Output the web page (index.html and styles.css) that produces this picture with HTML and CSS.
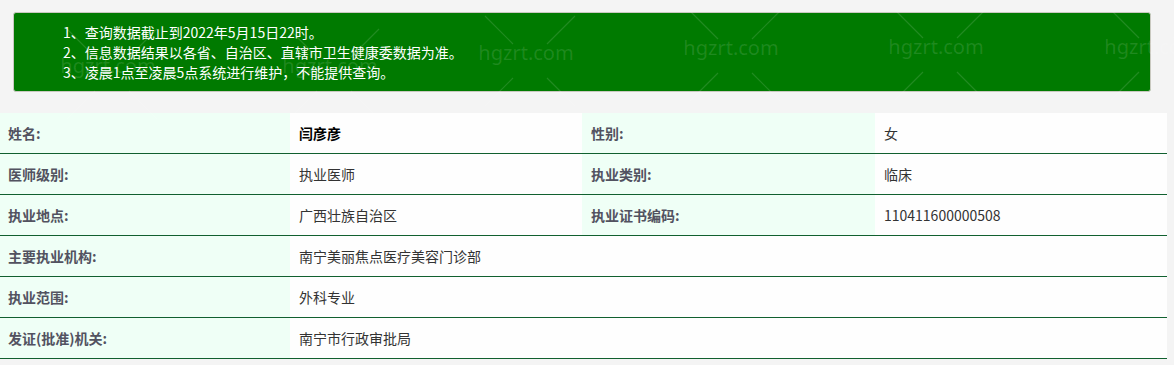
FILE: index.html
```html
<!DOCTYPE html>
<html lang="zh-CN">
<head>
<meta charset="utf-8">
<title>医师执业信息查询</title>
<link rel="stylesheet" href="styles.css">
</head>
<body>
<div class="page">
  <div class="notice">
    <p>1、查询数据截止到2022年5月15日22时。</p>
    <p>2、信息数据结果以各省、自治区、直辖市卫生健康委数据为准。</p>
    <p>3、凌晨1点至凌晨5点系统进行维护，不能提供查询。</p>
  </div>

  <table class="info">
    <colgroup>
      <col class="c1"><col class="c2"><col class="c3"><col class="c4">
    </colgroup>
    <tr>
      <th>姓名:</th><td class="name">闫彦彦</td>
      <th>性别:</th><td>女</td>
    </tr>
    <tr>
      <th>医师级别:</th><td>执业医师</td>
      <th>执业类别:</th><td>临床</td>
    </tr>
    <tr>
      <th>执业地点:</th><td>广西壮族自治区</td>
      <th>执业证书编码:</th><td>110411600000508</td>
    </tr>
    <tr>
      <th>主要执业机构:</th><td colspan="3">南宁美丽焦点医疗美容门诊部</td>
    </tr>
    <tr>
      <th>执业范围:</th><td colspan="3">外科专业</td>
    </tr>
    <tr>
      <th>发证(批准)机关:</th><td colspan="3">南宁市行政审批局</td>
    </tr>
  </table>

  <div class="watermarks" aria-hidden="true">
    <div class="wm" style="left:52px;top:14px"><svg class="x" width="120" height="120" viewBox="0 0 120 120"><path d="M15 15L43 43M105 15L77 43M15 105L43 77M105 105L77 77"/></svg><span>hgzrt.com</span></div>
    <div class="wm" style="left:274px;top:14px"><svg class="x" width="120" height="120" viewBox="0 0 120 120"><path d="M15 15L43 43M105 15L77 43M15 105L43 77M105 105L77 77"/></svg><span>hgzrt.com</span></div>
    <div class="wm" style="left:470px;top:1px"><svg class="x" width="120" height="120" viewBox="0 0 120 120"><path d="M15 15L43 43M105 15L77 43M15 105L43 77M105 105L77 77"/></svg><span>hgzrt.com</span></div>
    <div class="wm" style="left:675px;top:-4px"><svg class="x" width="120" height="120" viewBox="0 0 120 120"><path d="M15 15L43 43M105 15L77 43M15 105L43 77M105 105L77 77"/></svg><span>hgzrt.com</span></div>
    <div class="wm" style="left:880px;top:-5px"><svg class="x" width="120" height="120" viewBox="0 0 120 120"><path d="M15 15L43 43M105 15L77 43M15 105L43 77M105 105L77 77"/></svg><span>hgzrt.com</span></div>
    <div class="wm" style="left:1096px;top:-5px"><svg class="x" width="120" height="120" viewBox="0 0 120 120"><path d="M15 15L43 43M105 15L77 43M15 105L43 77M105 105L77 77"/></svg><span>hgzrt.com</span></div>
  </div>
</div>
</body>
</html>
```

FILE: styles.css
```css
html, body {
  margin: 0;
  padding: 0;
  background: #f4f4f4;
}

body {
  font-family: "Noto Sans CJK SC", "Noto Sans", sans-serif;
  font-size: 14px;
  color: #333;
  overflow: hidden;
}

.page {
  position: relative;
  width: 1167px;
  padding-top: 12px;
}

.notice {
  margin: 0 16px 0 13px;
  background: #007a00;
  border: 1px solid #c9c9c0;
  border-radius: 3px;
  padding: 9px 0 9px 49px;
  color: #ffffff;
}

.notice p {
  margin: 0;
  font-size: 14px;
  line-height: 20px;
}

.info {
  margin-top: 21px;
  width: 1167px;
  table-layout: fixed;
  border-collapse: collapse;
  border-spacing: 0;
}

.info .c1 { width: 290px; }
.info .c2 { width: 292px; }
.info .c3 { width: 293px; }
.info .c4 { width: 292px; }

.info th,
.info td {
  height: 40px;
  padding: 0 0 0 9px;
  border-bottom: 1px solid #11602f;
  text-align: left;
  vertical-align: middle;
  font-size: 14px;
  line-height: 20px;
}

.info th {
  background: #effff6;
  font-weight: bold;
  color: #525260;
}

.info tr th:first-child {
  padding-left: 8px;
}

.info td {
  background: #fefefe;
  color: #333;
  font-weight: normal;
}

.info td.name {
  font-weight: bold;
  color: #000;
}

.watermarks {
  position: absolute;
  left: 0;
  top: 0;
  width: 1174px;
  height: 365px;
  pointer-events: none;
  overflow: hidden;
}

.wm {
  position: absolute;
  width: 120px;
  height: 120px;
}

.wm .x {
  position: absolute;
  left: 0;
  top: 0;
}

.wm .x path {
  stroke: rgba(255, 255, 255, 0.13);
  stroke-width: 1.2;
  fill: none;
}

.wm span {
  position: absolute;
  left: 0;
  top: 38px;
  width: 112px;
  text-align: center;
  font-family: "Noto Sans", "Open Sans", sans-serif;
  font-size: 20px;
  line-height: 28px;
  color: rgba(255, 255, 255, 0.12);
  white-space: nowrap;
}
```
